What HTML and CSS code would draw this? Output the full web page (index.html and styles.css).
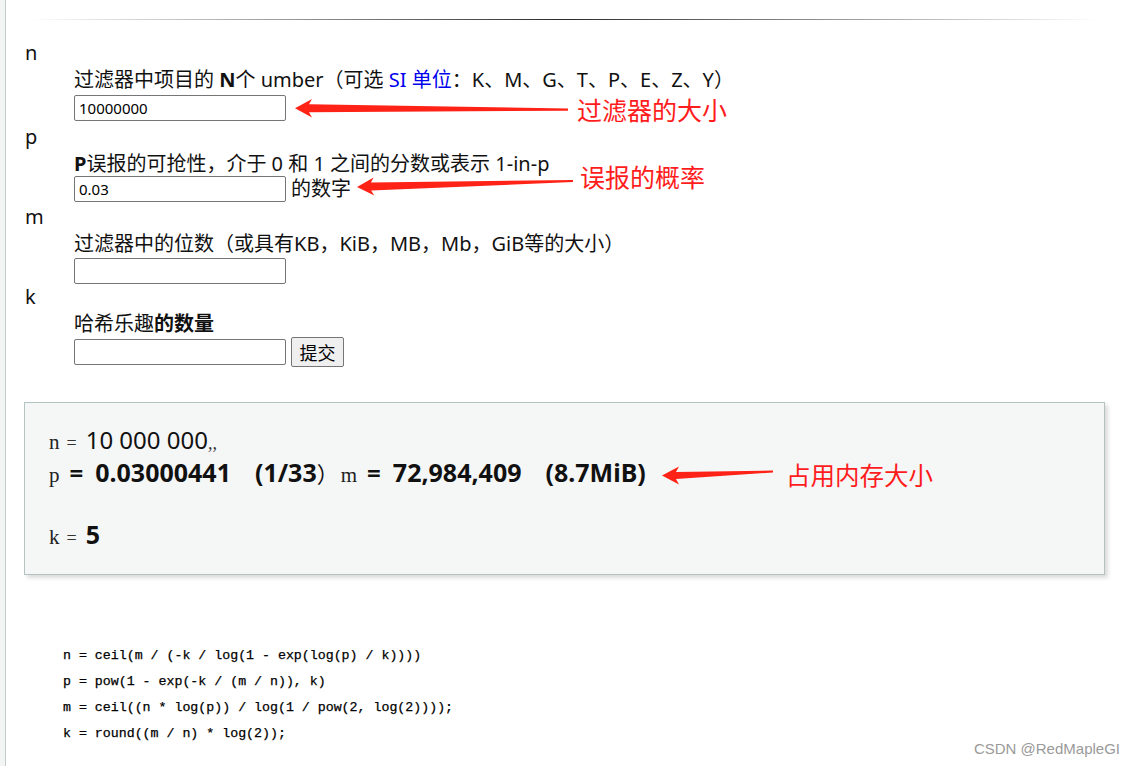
FILE: index.html
```html
<!DOCTYPE html>
<html lang="zh">
<head>
<meta charset="utf-8">
<title>Bloom filter calculator</title>
<link rel="stylesheet" href="styles.css">
</head>
<body>
<div class="page">
  <hr class="rule">
  <form class="calc">
    <dl class="fields">
      <dt>n</dt>
      <dd>
        <div class="label">过滤器中项目的 <b>N</b>个 umber（可选 <a class="link" href="#">SI 单位</a>：K、M、G、T、P、E、Z、Y）</div>
        <div class="row row-n"><input class="field" type="text" value="10000000"></div>
      </dd>
      <dt>p</dt>
      <dd>
        <div class="label"><b>P</b>误报的可抢性，介于 0 和 1 之间的分数或表示 1-in-p</div>
        <div class="row row-p"><input class="field" type="text" value="0.03"><span class="after">的数字</span></div>
      </dd>
      <dt>m</dt>
      <dd>
        <div class="label">过滤器中的位数（或具有KB，KiB，MB，Mb，GiB等的大小）</div>
        <div class="row row-m"><input class="field" type="text" value=""></div>
      </dd>
      <dt>k</dt>
      <dd>
        <div class="label">哈希乐趣<b>的数量</b></div>
        <div class="row row-k"><input class="field" type="text" value=""><button class="submit" type="button">提交</button></div>
      </dd>
    </dl>
  </form>

  <div class="result">
    <div class="line"><span class="var">n</span><span class="eq">=</span><span class="val">10 000 000</span><span class="commas">,,</span></div>
    <div class="line"><span class="var">p</span><b class="beq">=</b><b class="val">0.03000441</b><b class="paren">(1/33</b><span class="fw">）</span><span class="var">m</span><b class="beq">=</b><b class="val">72,984,409</b><b class="paren">(8.7MiB)</b></div>
    <div class="line line-k"><span class="var">k</span><span class="eq">=</span><b class="val">5</b></div>
  </div>

  <pre class="code">n = ceil(m / (-k / log(1 - exp(log(p) / k))))
p = pow(1 - exp(-k / (m / n)), k)
m = ceil((n * log(p)) / log(1 / pow(2, log(2))));
k = round((m / n) * log(2));</pre>
</div>

<svg class="arrows" width="1134" height="766" viewBox="0 0 1134 766" aria-hidden="true">
  <polygon points="295,108.3 312,99 309,104.3 568,108.5 568,110.7 309,112.3 312,117.5"/>
  <polygon points="357,187 373.7,177.5 370.9,182.6 573,179.9 573,182.1 371.1,190.6 374.3,195.5"/>
  <polygon points="662,475.5 679,466.5 676,472 773,470.5 773,472.5 676,479 679,484.5"/>
</svg>
<div class="note note-1">过滤器的大小</div>
<div class="note note-2">误报的概率</div>
<div class="note note-3">占用内存大小</div>
<div class="watermark">CSDN @RedMapleGI</div>
</body>
</html>
```
FILE: styles.css
```css
html, body {
  margin: 0;
  padding: 0;
}
body {
  position: relative;
  width: 1134px;
  height: 766px;
  overflow: hidden;
  background: #f3f5f5;
  font-family: "Noto Sans", "Noto Sans CJK SC", sans-serif;
  font-size: 20px;
  color: #111;
}
.page {
  margin-left: 5px;
  border-left: 1px solid #c3cccc;
  background: #fff;
  height: 766px;
  padding-top: 19px;
  box-sizing: border-box;
}
.rule {
  margin: 0 35px 0 23px;
  height: 1px;
  border: 0;
  background: linear-gradient(to right, rgba(40,40,40,0), #2a2a2a 50%, rgba(40,40,40,0));
}
.calc {
  margin: 20px 0 0 19px;
}
.fields {
  margin: 0;
}
.fields dt {
  line-height: 26px;
  height: 26px;
}
.fields dd {
  margin: 0 0 0 49px;
}
.label {
  line-height: 26px;
  height: 26px;
  white-space: nowrap;
  padding-top: 1px;
  box-sizing: border-box;
}
.label b {
  font-weight: 700;
}
.link {
  color: #0000ee;
  text-decoration: none;
}
.row {
  display: flex;
  align-items: flex-start;
  box-sizing: border-box;
}
.row-n { height: 32px; padding-top: 3px; }
.row-p { height: 28px; padding-top: 0; }
.row-m { height: 28px; padding-top: 2px; }
.row-k { height: 32px; padding-top: 0; align-items: center; }
.field {
  width: 212px;
  height: 26px;
  box-sizing: border-box;
  margin: 0;
  padding: 0 4px;
  border: 1px solid #767676;
  border-radius: 2px;
  font-family: "Noto Sans", sans-serif;
  font-size: 15px;
  color: #000;
  background: #fff;
}
.after {
  margin-left: 5px;
  line-height: 26px;
}
.submit {
  margin-left: 5px;
  width: 53px;
  height: 30px;
  padding: 0;
  border: 1px solid #767676;
  border-radius: 2px;
  background: #efefef;
  font-family: "Noto Sans CJK SC", sans-serif;
  font-size: 18px;
  color: #000;
}
.result {
  margin: 34px 0 0 18px;
  width: 1081px;
  box-sizing: border-box;
  padding: 21px 24px 24px 24px;
  background: #f5f6f6;
  border: 1px solid #b4c2c2;
  box-shadow: 3px 3px 4px rgba(0,0,0,0.14);
}
.line {
  line-height: 32px;
  height: 32px;
  white-space: nowrap;
  font-size: 24px;
}
.line-k {
  margin-top: 30px;
}
.var {
  font-family: "Liberation Serif", serif;
  font-size: 21px;
  color: #222;
}
.eq {
  font-family: "Liberation Serif", serif;
  font-size: 18px;
  color: #333;
  margin: 0 9px 0 7px;
}
.beq {
  margin: 0 12px 0 10px;
  font-weight: 700;
}
.val {
  color: #111;
}
b.val {
  font-weight: 700;
  font-size: 25px;
}
.commas {
  font-family: "Liberation Serif", serif;
  font-style: italic;
  font-size: 18px;
  color: #333;
}
.paren {
  margin-left: 24px;
  font-weight: 700;
  font-size: 25px;
}
.fw {
  font-family: "Noto Sans CJK SC", sans-serif;
  font-size: 22px;
  margin-right: 2px;
}
.code {
  margin: 68px 0 0 57px;
  font-family: "Liberation Mono", monospace;
  font-size: 13.27px;
  line-height: 26px;
  color: #000;
  -webkit-text-stroke: 0.25px #000;
}
.arrows {
  position: absolute;
  left: 0;
  top: 0;
  pointer-events: none;
  fill: #ff2216;
}
.note {
  position: absolute;
  font-family: "Noto Sans CJK SC", sans-serif;
  color: #ff1c1c;
  font-size: 25px;
  line-height: 25px;
  white-space: nowrap;
}
.note-1 { left: 577px; top: 97px; }
.note-2 { left: 580px; top: 164px; }
.note-3 { left: 786px; top: 462px; font-size: 24.5px; }
.watermark {
  position: absolute;
  right: 14px;
  bottom: 9px;
  font-family: "Liberation Sans", sans-serif;
  font-size: 15px;
  color: #9a9a9a;
}
```
